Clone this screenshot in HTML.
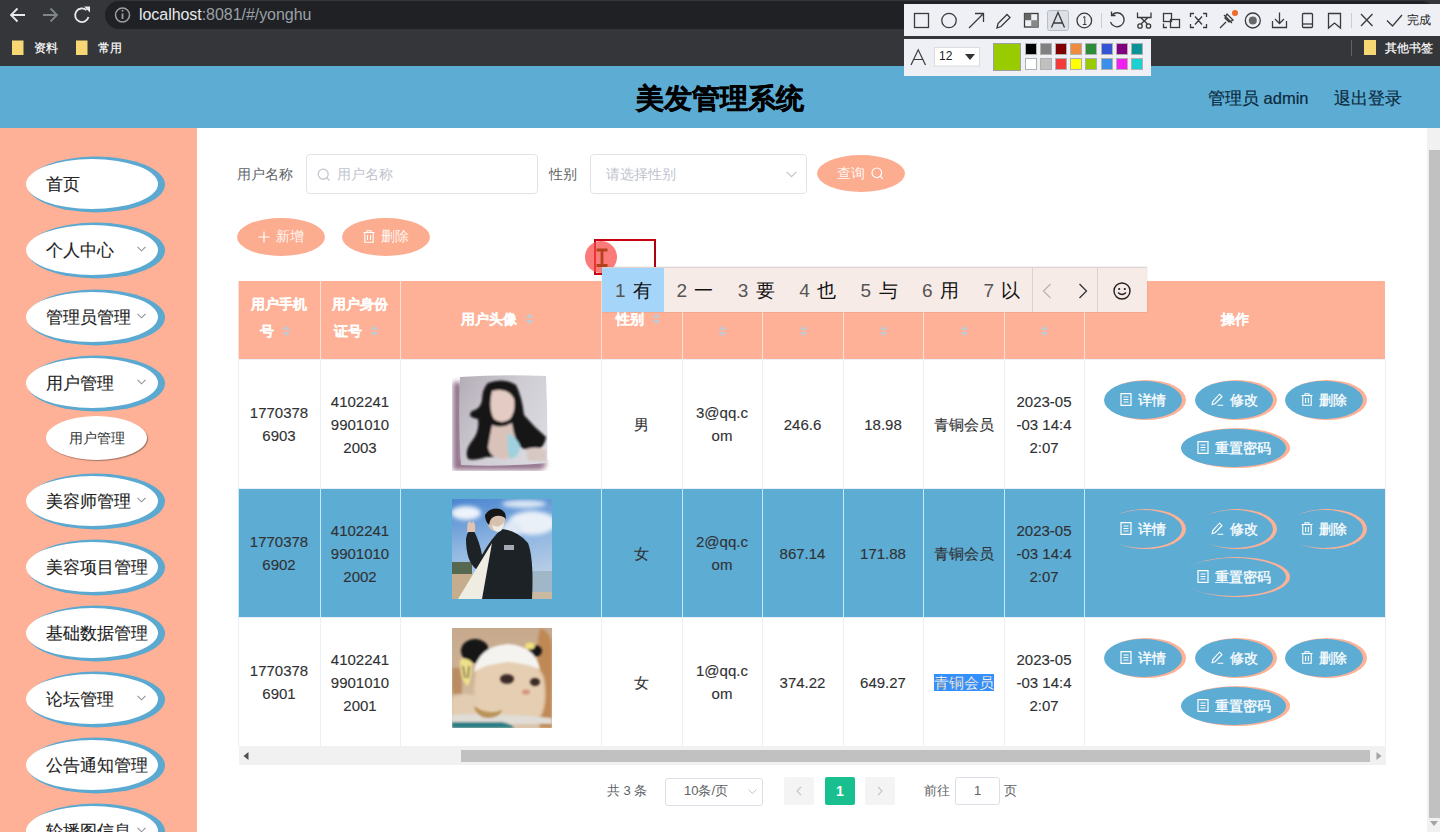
<!DOCTYPE html>
<html><head><meta charset="utf-8">
<style>
*{box-sizing:border-box;margin:0;padding:0}
html,body{width:1440px;height:832px;overflow:hidden;background:#fff;font-family:"Liberation Sans",sans-serif}
.abs{position:absolute}
#chrome{position:absolute;left:0;top:0;width:1440px;height:66px;background:#35363a}
#url{position:absolute;left:105px;top:1px;width:1330px;height:28px;border-radius:14px;background:#202124}
#hdr{position:absolute;left:0;top:66px;width:1440px;height:62px;background:#5dacd4}
#side{position:absolute;left:0;top:128px;width:197px;height:704px;background:#feb196}
#main{position:absolute;left:197px;top:128px;width:1230px;height:704px;background:#fff}
#vscroll{position:absolute;left:1427px;top:128px;width:13px;height:704px;background:#f1f1f1}
#vthumb{position:absolute;left:2px;top:22px;width:11px;height:668px;background:#c1c1c1}
.mi{position:absolute;left:26px;width:132px;height:50px;border-radius:50%;background:#fff;box-shadow:4px 0.5px 0 3px #5ba8d0;font-size:16.5px;color:#222;-webkit-text-stroke:0.12px #222;line-height:50px;padding-left:20px;white-space:nowrap}
.mi .arr{position:absolute;left:111px;top:21px;width:9px;height:6px}
.smi{position:absolute;left:46px;width:101px;height:44px;border-radius:50%;background:#fff;box-shadow:1px 1px 1px rgba(0,0,0,.35);font-size:14px;color:#303133;line-height:44px;text-align:center;white-space:nowrap}
.lbl{position:absolute;font-size:14px;color:#606266;line-height:18px;white-space:nowrap}
.inp{position:absolute;border:1px solid #e2e3e8;border-radius:4px;background:#fff}
.ph{position:absolute;top:10px;font-size:14px;line-height:18px;color:#c0c4cc;white-space:nowrap}
.sbtn{position:absolute;border-radius:50%;background:#fcac8f;color:#fff6f2;font-size:14px;text-align:center;line-height:37px;white-space:nowrap}
.hc{position:absolute;display:flex;align-items:center;justify-content:center;text-align:center;color:#fff;font-weight:bold;-webkit-text-stroke:0.2px #fff;font-size:14px;line-height:27px;padding-bottom:4px}
.cw{display:inline-block;width:24px;height:12px;position:relative;vertical-align:middle}.cw svg{position:absolute;left:8px;top:-1px}
.tc{position:absolute;display:flex;align-items:center;justify-content:center;text-align:center;color:#303133;-webkit-text-stroke:0.12px #303133;font-size:15px;line-height:23px;padding-top:1px}
.sel{background:#3390ff;color:#fff}
.av{position:absolute;width:100px;height:100px}
.av1{background:linear-gradient(160deg,#c8c3cc,#9a8c9a)}
.av2{background:linear-gradient(180deg,#7fb0e0,#c9dcef 55%,#b9a88a)}
.av3{background:linear-gradient(180deg,#cbb49a,#e8d8c4 60%,#4a8a8a)}
.ob,.ob2{position:absolute;height:38px;border-radius:50%;background:#5dacd4;box-shadow:3px 0 0 1px #fdb196;color:#fff;-webkit-text-stroke:0.3px #fff;font-size:14px;line-height:38px;text-align:center;white-space:nowrap}
.ob2{background:transparent}
.bi{vertical-align:-1px;margin-right:6px}
.pg{position:absolute;font-size:13px;color:#606266;line-height:17px;white-space:nowrap}
.imen{position:absolute;top:280px;font-size:19px;line-height:22px;color:#555}
.imec{position:absolute;top:280px;font-size:19px;line-height:22px;color:#111}
.sw{position:absolute;width:12px;height:12px;border:1px solid #b0b0b0}
</style></head><body>
<div id="chrome">
  <div id="url"></div>
<svg class="abs" style="left:0;top:0" width="140" height="66" viewBox="0 0 140 66" fill="none">
<path d="M25 15H11.5M17.5 8.5L11 15L17.5 21.5" stroke="#e8eaed" stroke-width="1.8"/>
<path d="M43 15H56.5M50.5 8.5L57 15L50.5 21.5" stroke="#80868b" stroke-width="1.8"/>
<path d="M88.5 17A6.8 6.8 0 1 1 86.5 10.2" stroke="#e8eaed" stroke-width="1.8"/><path d="M84 6.5H90V12.5Z" fill="#e8eaed"/>
<circle cx="122.5" cy="15" r="7" stroke="#9aa0a6" stroke-width="1.5"/><path d="M122.5 13.5V19" stroke="#9aa0a6" stroke-width="1.8"/><circle cx="122.5" cy="10.8" r="1" fill="#9aa0a6"/>
<path d="M12 40.5H23.5V55H12Z" fill="#f7d774"/>
<path d="M76 40.5H87.5V55H76Z" fill="#f7d774"/>
</svg>
<div class="abs" style="left:139px;top:4px;font-size:16px;line-height:21px;letter-spacing:-0.05px;white-space:nowrap;color:#9aa0a6"><span style="color:#e8eaed">localhost</span>:8081/#/yonghu</div>
<div class="abs" style="left:34px;top:40px;font-size:12px;line-height:16px;color:#fff;-webkit-text-stroke:0.2px #fff">资料</div>
<div class="abs" style="left:98px;top:40px;font-size:12px;line-height:16px;color:#fff;-webkit-text-stroke:0.2px #fff">常用</div>
<div class="abs" style="left:1351px;top:40px;width:1px;height:16px;background:#5f6368"></div>
<div class="abs" style="left:1364px;top:40px;width:12px;height:15px;background:#f7d774"></div>
<div class="abs" style="left:1385px;top:40px;font-size:12px;line-height:16px;color:#fff;-webkit-text-stroke:0.2px #fff;white-space:nowrap">其他书签</div>

</div>
<div id="hdr">
  <div class="abs" style="left:0;top:17px;width:1440px;text-align:center;font-size:28px;font-weight:bold;color:#000;-webkit-text-stroke:0.5px #000;line-height:32px">美发管理系统</div>
  <div class="abs" style="left:1208px;top:21px;font-size:16.5px;color:#0b2a3c;-webkit-text-stroke:0.2px #0b2a3c;line-height:22px;white-space:nowrap">管理员 admin</div>
  <div class="abs" style="left:1334px;top:21px;font-size:16.5px;color:#0b2a3c;-webkit-text-stroke:0.2px #0b2a3c;line-height:22px;white-space:nowrap">退出登录</div>
</div>
<div id="side">
<div class="mi" style="top:31.1px">首页</div>
<div class="mi" style="top:97.1px">个人中心<svg class="arr" viewBox="0 0 9 6"><path d="M0.5 0.8L4.5 4.8L8.5 0.8" fill="none" stroke="#909399" stroke-width="1.1"/></svg></div>
<div class="mi" style="top:163.5px">管理员管理<svg class="arr" viewBox="0 0 9 6"><path d="M0.5 0.8L4.5 4.8L8.5 0.8" fill="none" stroke="#909399" stroke-width="1.1"/></svg></div>
<div class="mi" style="top:230.0px">用户管理<svg class="arr" viewBox="0 0 9 6"><path d="M0.5 0.8L4.5 4.8L8.5 0.8" fill="none" stroke="#909399" stroke-width="1.1"/></svg></div>
<div class="mi" style="top:348.3px">美容师管理<svg class="arr" viewBox="0 0 9 6"><path d="M0.5 0.8L4.5 4.8L8.5 0.8" fill="none" stroke="#909399" stroke-width="1.1"/></svg></div>
<div class="mi" style="top:414.3px">美容项目管理<svg class="arr" viewBox="0 0 9 6"><path d="M0.5 0.8L4.5 4.8L8.5 0.8" fill="none" stroke="#909399" stroke-width="1.1"/></svg></div>
<div class="mi" style="top:480.3px">基础数据管理<svg class="arr" viewBox="0 0 9 6"><path d="M0.5 0.8L4.5 4.8L8.5 0.8" fill="none" stroke="#909399" stroke-width="1.1"/></svg></div>
<div class="mi" style="top:546.3px">论坛管理<svg class="arr" viewBox="0 0 9 6"><path d="M0.5 0.8L4.5 4.8L8.5 0.8" fill="none" stroke="#909399" stroke-width="1.1"/></svg></div>
<div class="mi" style="top:612.3px">公告通知管理<svg class="arr" viewBox="0 0 9 6"><path d="M0.5 0.8L4.5 4.8L8.5 0.8" fill="none" stroke="#909399" stroke-width="1.1"/></svg></div>
<div class="mi" style="top:678.3px">轮播图信息<svg class="arr" viewBox="0 0 9 6"><path d="M0.5 0.8L4.5 4.8L8.5 0.8" fill="none" stroke="#909399" stroke-width="1.1"/></svg></div>
<div class="smi" style="top:288px">用户管理</div>
</div>
<div id="main">
<div class="lbl" style="left:40px;top:37px">用户名称</div>
<div class="inp" style="left:109px;top:26px;width:232px;height:40px">
  <svg class="abs" style="left:10px;top:13px" width="14" height="14" viewBox="0 0 14 14"><circle cx="6.2" cy="6.2" r="5" fill="none" stroke="#c0c4cc" stroke-width="1.2"/><path d="M9.8 9.8L12.5 12.5" stroke="#c0c4cc" stroke-width="1.2"/></svg>
  <div class="ph" style="left:30px">用户名称</div>
</div>
<div class="lbl" style="left:352px;top:37px">性别</div>
<div class="inp" style="left:393px;top:26px;width:217px;height:40px">
  <div class="ph" style="left:15px">请选择性别</div>
  <svg class="abs" style="left:195px;top:16px" width="11" height="7" viewBox="0 0 11 7"><path d="M0.7 0.8L5.5 5.6L10.3 0.8" fill="none" stroke="#c0c4cc" stroke-width="1.2"/></svg>
</div>
<div class="sbtn" style="left:620px;top:27px;width:88px;height:37px;text-align:left;padding-left:20px">查询
  <svg style="position:absolute;left:54px;top:12px" width="13" height="13" viewBox="0 0 13 13"><circle cx="5.8" cy="5.8" r="4.8" fill="none" stroke="#fff" stroke-width="1.2"/><path d="M9.2 9.2L11.8 11.8" stroke="#fff" stroke-width="1.2"/></svg>
</div>
<div class="sbtn" style="left:40px;top:90px;width:88px;height:38px;padding-left:18px">
  <svg style="position:absolute;left:21px;top:13px" width="12" height="12" viewBox="0 0 12 12"><path d="M6 0.5V11.5M0.5 6H11.5" stroke="#fff" stroke-width="1.2"/></svg>新增</div>
<div class="sbtn" style="left:145px;top:90px;width:88px;height:38px;padding-left:18px">
  <svg style="position:absolute;left:21px;top:12px" width="12" height="13" viewBox="0 0 12 13"><path d="M0.5 2.5H11.5M4 2.5V0.8H8V2.5M1.8 2.5V12.3H10.2V2.5M4.5 5V10M7.5 5V10" fill="none" stroke="#fff" stroke-width="1.1"/></svg>删除</div>
</div>
<!--TABLE-->
<div class="abs" style="left:238px;top:281px;width:1147px;height:78px;background:#feb196"></div>
<div class="abs" style="left:238px;top:488px;width:1147px;height:129px;background:#5dacd4"></div>
<div class="abs" style="left:238px;top:359px;width:1147px;height:1px;background:#ebeef5"></div>
<div class="abs" style="left:238px;top:488px;width:1147px;height:1px;background:#ebeef5"></div>
<div class="abs" style="left:238px;top:617px;width:1147px;height:1px;background:#ebeef5"></div>
<div class="abs" style="left:238px;top:281px;width:1px;height:78px;background:#fde0d4"></div>
<div class="abs" style="left:238px;top:359px;width:1px;height:129px;background:#ebeef5"></div>
<div class="abs" style="left:238px;top:488px;width:1px;height:129px;background:#c4e9fb"></div>
<div class="abs" style="left:238px;top:617px;width:1px;height:129px;background:#ebeef5"></div>
<div class="abs" style="left:320px;top:281px;width:1px;height:78px;background:#fde0d4"></div>
<div class="abs" style="left:320px;top:359px;width:1px;height:129px;background:#ebeef5"></div>
<div class="abs" style="left:320px;top:488px;width:1px;height:129px;background:#c4e9fb"></div>
<div class="abs" style="left:320px;top:617px;width:1px;height:129px;background:#ebeef5"></div>
<div class="abs" style="left:400px;top:281px;width:1px;height:78px;background:#fde0d4"></div>
<div class="abs" style="left:400px;top:359px;width:1px;height:129px;background:#ebeef5"></div>
<div class="abs" style="left:400px;top:488px;width:1px;height:129px;background:#c4e9fb"></div>
<div class="abs" style="left:400px;top:617px;width:1px;height:129px;background:#ebeef5"></div>
<div class="abs" style="left:601px;top:281px;width:1px;height:78px;background:#fde0d4"></div>
<div class="abs" style="left:601px;top:359px;width:1px;height:129px;background:#ebeef5"></div>
<div class="abs" style="left:601px;top:488px;width:1px;height:129px;background:#c4e9fb"></div>
<div class="abs" style="left:601px;top:617px;width:1px;height:129px;background:#ebeef5"></div>
<div class="abs" style="left:682px;top:281px;width:1px;height:78px;background:#fde0d4"></div>
<div class="abs" style="left:682px;top:359px;width:1px;height:129px;background:#ebeef5"></div>
<div class="abs" style="left:682px;top:488px;width:1px;height:129px;background:#c4e9fb"></div>
<div class="abs" style="left:682px;top:617px;width:1px;height:129px;background:#ebeef5"></div>
<div class="abs" style="left:762px;top:281px;width:1px;height:78px;background:#fde0d4"></div>
<div class="abs" style="left:762px;top:359px;width:1px;height:129px;background:#ebeef5"></div>
<div class="abs" style="left:762px;top:488px;width:1px;height:129px;background:#c4e9fb"></div>
<div class="abs" style="left:762px;top:617px;width:1px;height:129px;background:#ebeef5"></div>
<div class="abs" style="left:843px;top:281px;width:1px;height:78px;background:#fde0d4"></div>
<div class="abs" style="left:843px;top:359px;width:1px;height:129px;background:#ebeef5"></div>
<div class="abs" style="left:843px;top:488px;width:1px;height:129px;background:#c4e9fb"></div>
<div class="abs" style="left:843px;top:617px;width:1px;height:129px;background:#ebeef5"></div>
<div class="abs" style="left:923px;top:281px;width:1px;height:78px;background:#fde0d4"></div>
<div class="abs" style="left:923px;top:359px;width:1px;height:129px;background:#ebeef5"></div>
<div class="abs" style="left:923px;top:488px;width:1px;height:129px;background:#c4e9fb"></div>
<div class="abs" style="left:923px;top:617px;width:1px;height:129px;background:#ebeef5"></div>
<div class="abs" style="left:1004px;top:281px;width:1px;height:78px;background:#fde0d4"></div>
<div class="abs" style="left:1004px;top:359px;width:1px;height:129px;background:#ebeef5"></div>
<div class="abs" style="left:1004px;top:488px;width:1px;height:129px;background:#c4e9fb"></div>
<div class="abs" style="left:1004px;top:617px;width:1px;height:129px;background:#ebeef5"></div>
<div class="abs" style="left:1084px;top:281px;width:1px;height:78px;background:#fde0d4"></div>
<div class="abs" style="left:1084px;top:359px;width:1px;height:129px;background:#ebeef5"></div>
<div class="abs" style="left:1084px;top:488px;width:1px;height:129px;background:#c4e9fb"></div>
<div class="abs" style="left:1084px;top:617px;width:1px;height:129px;background:#ebeef5"></div>
<div class="abs" style="left:1385px;top:359px;width:1px;height:387px;background:#ebeef5"></div>
<div class="hc" style="left:238px;top:281px;width:82px;height:78px"><div>用户手机<br>号<span class="cw"><svg width="9" height="12" viewBox="0 0 9 12"><path d="M4.5 0.5L8.5 5H0.5Z M4.5 11.5L8.5 7H0.5Z" fill="#c4c8d0"/></svg></span></div></div>
<div class="hc" style="left:320px;top:281px;width:80px;height:78px"><div>用户身份<br>证号<span class="cw"><svg width="9" height="12" viewBox="0 0 9 12"><path d="M4.5 0.5L8.5 5H0.5Z M4.5 11.5L8.5 7H0.5Z" fill="#c4c8d0"/></svg></span></div></div>
<div class="hc" style="padding-bottom:2px;left:400px;top:281px;width:201px;height:78px"><div>用户头像<span class="cw"><svg width="9" height="12" viewBox="0 0 9 12"><path d="M4.5 0.5L8.5 5H0.5Z M4.5 11.5L8.5 7H0.5Z" fill="#c4c8d0"/></svg></span></div></div>
<div class="hc" style="padding-bottom:2px;left:601px;top:281px;width:81px;height:78px"><div>性别<span class="cw"><svg width="9" height="12" viewBox="0 0 9 12"><path d="M4.5 0.5L8.5 5H0.5Z M4.5 11.5L8.5 7H0.5Z" fill="#c4c8d0"/></svg></span></div></div>
<div class="hc" style="left:682px;top:281px;width:80px;height:78px"><div>用户邮箱<br><span class="cw"><svg width="9" height="12" viewBox="0 0 9 12"><path d="M4.5 0.5L8.5 5H0.5Z M4.5 11.5L8.5 7H0.5Z" fill="#c4c8d0"/></svg></span></div></div>
<div class="hc" style="left:762px;top:281px;width:81px;height:78px"><div>余额<br><span class="cw"><svg width="9" height="12" viewBox="0 0 9 12"><path d="M4.5 0.5L8.5 5H0.5Z M4.5 11.5L8.5 7H0.5Z" fill="#c4c8d0"/></svg></span></div></div>
<div class="hc" style="left:843px;top:281px;width:80px;height:78px"><div>积分<br><span class="cw"><svg width="9" height="12" viewBox="0 0 9 12"><path d="M4.5 0.5L8.5 5H0.5Z M4.5 11.5L8.5 7H0.5Z" fill="#c4c8d0"/></svg></span></div></div>
<div class="hc" style="left:923px;top:281px;width:81px;height:78px"><div>会员等级<br><span class="cw"><svg width="9" height="12" viewBox="0 0 9 12"><path d="M4.5 0.5L8.5 5H0.5Z M4.5 11.5L8.5 7H0.5Z" fill="#c4c8d0"/></svg></span></div></div>
<div class="hc" style="left:1004px;top:281px;width:80px;height:78px"><div>创建时间<br><span class="cw"><svg width="9" height="12" viewBox="0 0 9 12"><path d="M4.5 0.5L8.5 5H0.5Z M4.5 11.5L8.5 7H0.5Z" fill="#c4c8d0"/></svg></span></div></div>
<div class="hc" style="padding-bottom:2px;left:1084px;top:281px;width:301px;height:78px"><div>操作</div></div>
<div class="tc" style="left:238px;top:359px;width:82px;height:129px"><div>1770378<br>6903</div></div>
<div class="tc" style="left:320px;top:359px;width:80px;height:129px"><div>4102241<br>9901010<br>2003</div></div>
<div class="tc" style="left:601px;top:359px;width:81px;height:129px"><div>男</div></div>
<div class="tc" style="left:682px;top:359px;width:80px;height:129px"><div>3@qq.c<br>om</div></div>
<div class="tc" style="left:762px;top:359px;width:81px;height:129px"><div>246.6</div></div>
<div class="tc" style="left:843px;top:359px;width:80px;height:129px"><div>18.98</div></div>
<div class="tc" style="left:923px;top:359px;width:81px;height:129px"><div>青铜会员</div></div>
<div class="tc" style="left:1004px;top:359px;width:80px;height:129px"><div>2023-05<br>-03 14:4<br>2:07</div></div>
<div class="av" style="left:452px;top:371px"><svg width="100" height="100" viewBox="0 0 100 100">
<defs>
<linearGradient id="p1" x1="0" y1="0" x2="1" y2="0.6"><stop offset="0" stop-color="#b3adb6"/><stop offset="0.55" stop-color="#cfccd4"/><stop offset="1" stop-color="#dad9df"/></linearGradient>
<filter id="bl1"><feGaussianBlur stdDeviation="2.8"/></filter>
<filter id="bl1b"><feGaussianBlur stdDeviation="1"/></filter>
</defs>
<rect width="100" height="100" fill="#fff"/>
<path d="M1 12Q6 8 10 14V90H94Q96 99 84 99H1Z" fill="#87647f" filter="url(#bl1)" opacity="0.9"/>
<path d="M8 6Q50 3 94 5Q96 50 95 92Q50 96 9 94Q6 50 8 6Z" fill="url(#p1)"/>
<g filter="url(#bl1b)">
<path d="M36 12Q52 6 64 14Q70 26 72 44Q82 56 94 66Q92 80 78 80Q66 76 62 70L60 86H34Q22 90 16 88Q12 80 20 70Q28 60 26 48Q14 46 20 40Q28 38 30 30Q30 18 36 12Z" fill="#161214"/>
<path d="M40 20Q56 16 62 28Q64 40 58 48Q50 54 42 48Q36 38 40 20Z" fill="#e4ccc4"/>
<path d="M40 54Q50 58 60 52Q62 66 66 72Q66 86 52 88Q38 88 36 76Q38 64 40 54Z" fill="#d9c2ba"/>
<path d="M56 62Q64 66 68 74Q68 86 58 88Q54 76 56 62Z" fill="#9fd2de"/>
<path d="M74 78Q86 74 94 80V90H76Z" fill="#d8c8c4"/>
</g>
</svg></div>
<div class="ob" style="left:1104px;top:381px;width:78px"><svg class="bi" width="12" height="13" viewBox="0 0 12 13"><path d="M1 0.6H11V12.4H1Z M3.5 4H8.5 M3.5 6.5H8.5 M3.5 9H8.5" fill="none" stroke="#fff" stroke-width="1.2"/></svg>详情</div>
<div class="ob" style="left:1195px;top:381px;width:78px"><svg class="bi" width="13" height="13" viewBox="0 0 13 13"><path d="M8.5 1.2L11 3.7L4 10.7L1.2 11.6L1.8 8.6Z M6.5 12.3H12.3" fill="none" stroke="#fff" stroke-width="1.1"/></svg>修改</div>
<div class="ob" style="left:1285px;top:381px;width:78px"><svg class="bi" width="12" height="13" viewBox="0 0 12 13"><path d="M0.5 2.5H11.5M4 2.5V0.7H8V2.5M1.8 2.5V12.3H10.2V2.5M4.6 5V10M7.4 5V10" fill="none" stroke="#fff" stroke-width="1.1"/></svg>删除</div>
<div class="ob" style="left:1181px;top:429px;width:105px"><svg class="bi" width="12" height="13" viewBox="0 0 12 13"><path d="M1 0.6H11V12.4H1Z M3.5 4H8.5 M3.5 6.5H8.5 M3.5 9H8.5" fill="none" stroke="#fff" stroke-width="1.2"/></svg>重置密码</div>
<div class="tc" style="left:238px;top:488px;width:82px;height:129px"><div>1770378<br>6902</div></div>
<div class="tc" style="left:320px;top:488px;width:80px;height:129px"><div>4102241<br>9901010<br>2002</div></div>
<div class="tc" style="left:601px;top:488px;width:81px;height:129px"><div>女</div></div>
<div class="tc" style="left:682px;top:488px;width:80px;height:129px"><div>2@qq.c<br>om</div></div>
<div class="tc" style="left:762px;top:488px;width:81px;height:129px"><div>867.14</div></div>
<div class="tc" style="left:843px;top:488px;width:80px;height:129px"><div>171.88</div></div>
<div class="tc" style="left:923px;top:488px;width:81px;height:129px"><div>青铜会员</div></div>
<div class="tc" style="left:1004px;top:488px;width:80px;height:129px"><div>2023-05<br>-03 14:4<br>2:07</div></div>
<div class="av" style="left:452px;top:499px"><svg width="100" height="100" viewBox="0 0 100 100">
<defs>
<linearGradient id="s2" x1="0" y1="0" x2="0.2" y2="1"><stop offset="0" stop-color="#4a86d0"/><stop offset="0.5" stop-color="#8fb6e2"/><stop offset="1" stop-color="#c4d4e6"/></linearGradient>
<filter id="bl2"><feGaussianBlur stdDeviation="2"/></filter>
<filter id="bl2b"><feGaussianBlur stdDeviation="0.7"/></filter>
</defs>
<rect width="100" height="100" fill="url(#s2)"/>
<g filter="url(#bl2)">
<ellipse cx="14" cy="14" rx="15" ry="7" fill="#eef3fa"/>
<ellipse cx="80" cy="24" rx="24" ry="12" fill="#e9f0f8"/>
<ellipse cx="72" cy="5" rx="22" ry="4" fill="#dce7f4"/>
<ellipse cx="60" cy="30" rx="10" ry="8" fill="#dfe9f5"/>
</g>
<rect x="0" y="63" width="20" height="13" fill="#56684f" filter="url(#bl2b)"/>
<rect x="0" y="75" width="28" height="25" fill="#c5ad8e"/>
<rect x="78" y="72" width="22" height="22" fill="#9fb7c7"/>
<rect x="78" y="93" width="22" height="7" fill="#c9b9a2"/>
<g filter="url(#bl2b)">
<path d="M14 40Q15 30 22 32Q28 44 30 56Q40 38 50 30Q66 32 76 44Q82 60 80 100H26Q26 80 24 70Q14 62 14 40Z" fill="#1d2027"/>
<path d="M35 16Q44 12 53 18Q54 28 48 32Q39 34 36 26Z" fill="#d7c0ae"/>
<path d="M33 16Q38 8 48 10Q54 12 54 20Q50 16 44 17Q38 18 37 26Q33 22 33 16Z" fill="#171717"/>
<path d="M40 26Q47 30 52 23Q52 32 46 33Q41 32 40 26Z" fill="#ecebe6"/>
<path d="M15 33Q15 22 18 22Q20 26 21 22Q24 24 23 33Z" fill="#e2c2b2"/>
<path d="M40 44L30 100H6Z" fill="#efece2"/>
<rect x="52" y="46" width="10" height="5" fill="#a4a9b5"/>
</g>
</svg></div>
<div class="ob2" style="left:1104px;top:510px;width:78px"><svg class="bi" width="12" height="13" viewBox="0 0 12 13"><path d="M1 0.6H11V12.4H1Z M3.5 4H8.5 M3.5 6.5H8.5 M3.5 9H8.5" fill="none" stroke="#fff" stroke-width="1.2"/></svg>详情</div>
<div class="ob2" style="left:1195px;top:510px;width:78px"><svg class="bi" width="13" height="13" viewBox="0 0 13 13"><path d="M8.5 1.2L11 3.7L4 10.7L1.2 11.6L1.8 8.6Z M6.5 12.3H12.3" fill="none" stroke="#fff" stroke-width="1.1"/></svg>修改</div>
<div class="ob2" style="left:1285px;top:510px;width:78px"><svg class="bi" width="12" height="13" viewBox="0 0 12 13"><path d="M0.5 2.5H11.5M4 2.5V0.7H8V2.5M1.8 2.5V12.3H10.2V2.5M4.6 5V10M7.4 5V10" fill="none" stroke="#fff" stroke-width="1.1"/></svg>删除</div>
<div class="ob2" style="left:1181px;top:558px;width:105px"><svg class="bi" width="12" height="13" viewBox="0 0 12 13"><path d="M1 0.6H11V12.4H1Z M3.5 4H8.5 M3.5 6.5H8.5 M3.5 9H8.5" fill="none" stroke="#fff" stroke-width="1.2"/></svg>重置密码</div>
<div class="tc" style="left:238px;top:617px;width:82px;height:129px"><div>1770378<br>6901</div></div>
<div class="tc" style="left:320px;top:617px;width:80px;height:129px"><div>4102241<br>9901010<br>2001</div></div>
<div class="tc" style="left:601px;top:617px;width:81px;height:129px"><div>女</div></div>
<div class="tc" style="left:682px;top:617px;width:80px;height:129px"><div>1@qq.c<br>om</div></div>
<div class="tc" style="left:762px;top:617px;width:81px;height:129px"><div>374.22</div></div>
<div class="tc" style="left:843px;top:617px;width:80px;height:129px"><div>649.27</div></div>
<div class="tc" style="left:923px;top:617px;width:81px;height:129px"><div><span class="sel">青铜会员</span></div></div>
<div class="tc" style="left:1004px;top:617px;width:80px;height:129px"><div>2023-05<br>-03 14:4<br>2:07</div></div>
<div class="av" style="left:452px;top:628px"><svg width="100" height="100" viewBox="0 0 100 100">
<defs>
<linearGradient id="c3" x1="0" y1="0" x2="0" y2="1"><stop offset="0" stop-color="#c7aa8e"/><stop offset="0.5" stop-color="#cdb296"/><stop offset="1" stop-color="#dcc7ae"/></linearGradient>
<filter id="bl3"><feGaussianBlur stdDeviation="1.8"/></filter>
<filter id="bl3b"><feGaussianBlur stdDeviation="0.8"/></filter>
</defs>
<rect width="100" height="100" fill="url(#c3)"/>
<g filter="url(#bl3)">
<rect x="0" y="40" width="10" height="26" fill="#b98c62"/>
<path d="M88 0Q100 4 100 20V100H88Q82 70 86 40Q84 16 88 0Z" fill="#c08855"/>
<path d="M24 40Q30 30 56 30Q86 32 92 50Q96 76 88 90Q60 96 32 92Q18 80 24 40Z" fill="#e5ceb1"/>
<path d="M0 70Q14 62 26 70V90H0Z" fill="#e2cdb3"/>
</g>
<g filter="url(#bl3b)">
<path d="M0 87Q40 84 100 90V96H0Z" fill="#e0dcd6"/>
<path d="M0 94H50Q60 96 62 100H0Z" fill="#2b7f86"/>
<ellipse cx="23" cy="23" rx="14" ry="12" fill="#131313"/>
<ellipse cx="83" cy="23" rx="7" ry="6" fill="#161616"/>
<ellipse cx="78" cy="18" rx="5" ry="3.5" fill="#f0df7a"/>
<path d="M22 44Q26 18 56 16Q84 18 88 42Q78 36 56 34Q34 36 22 44Z" fill="#f5f3ef"/>
<path d="M8 32Q14 28 20 34Q20 52 16 58Q8 54 8 32Z" fill="#efe08a"/>
<path d="M11 38L13 50M17 38L16 50" stroke="#5a5040" stroke-width="1.5"/>
<ellipse cx="55" cy="51" rx="7" ry="4.8" fill="#3a2b25"/>
<ellipse cx="83" cy="54" rx="5" ry="4" fill="#3a2b25"/>
<ellipse cx="74" cy="64" rx="4" ry="2.6" fill="#d6957f"/>
<path d="M22 78Q36 88 50 82Q48 90 34 90Q24 88 22 78Z" fill="#b99356"/>
</g>
</svg></div>
<div class="ob" style="left:1104px;top:639px;width:78px"><svg class="bi" width="12" height="13" viewBox="0 0 12 13"><path d="M1 0.6H11V12.4H1Z M3.5 4H8.5 M3.5 6.5H8.5 M3.5 9H8.5" fill="none" stroke="#fff" stroke-width="1.2"/></svg>详情</div>
<div class="ob" style="left:1195px;top:639px;width:78px"><svg class="bi" width="13" height="13" viewBox="0 0 13 13"><path d="M8.5 1.2L11 3.7L4 10.7L1.2 11.6L1.8 8.6Z M6.5 12.3H12.3" fill="none" stroke="#fff" stroke-width="1.1"/></svg>修改</div>
<div class="ob" style="left:1285px;top:639px;width:78px"><svg class="bi" width="12" height="13" viewBox="0 0 12 13"><path d="M0.5 2.5H11.5M4 2.5V0.7H8V2.5M1.8 2.5V12.3H10.2V2.5M4.6 5V10M7.4 5V10" fill="none" stroke="#fff" stroke-width="1.1"/></svg>删除</div>
<div class="ob" style="left:1181px;top:687px;width:105px"><svg class="bi" width="12" height="13" viewBox="0 0 12 13"><path d="M1 0.6H11V12.4H1Z M3.5 4H8.5 M3.5 6.5H8.5 M3.5 9H8.5" fill="none" stroke="#fff" stroke-width="1.2"/></svg>重置密码</div>
<!--/TABLE-->
<!--EXTRA-->
<div class="abs" style="left:239px;top:746px;width:1147px;height:19px;background:#f1f1f1"></div>
<div class="abs" style="left:461px;top:750px;width:909px;height:12px;background:#c1c1c1"></div>
<svg class="abs" style="left:243px;top:752px" width="6" height="8" viewBox="0 0 6 8"><path d="M5.5 0L0.5 4L5.5 8Z" fill="#505050"/></svg>
<svg class="abs" style="left:1376px;top:752px" width="6" height="8" viewBox="0 0 6 8"><path d="M0.5 0L5.5 4L0.5 8Z" fill="#a3a3a3"/></svg>
<div class="pg" style="left:607px;top:782px">共 3 条</div>
<div class="abs" style="left:665px;top:778px;width:98px;height:28px;border:1px solid #dcdfe6;border-radius:3px"></div>
<div class="pg" style="left:684px;top:782px;color:#606266">10条/页</div>
<svg class="abs" style="left:748px;top:789px" width="9" height="6" viewBox="0 0 9 6"><path d="M0.6 0.6L4.5 4.5L8.4 0.6" fill="none" stroke="#c0c4cc" stroke-width="1"/></svg>
<div class="abs" style="left:784px;top:777px;width:30px;height:28px;background:#f4f4f5;border-radius:2px"></div>
<svg class="abs" style="left:796px;top:786px" width="6" height="10" viewBox="0 0 6 10"><path d="M5 0.8L1 5L5 9.2" fill="none" stroke="#c0c4cc" stroke-width="1.2"/></svg>
<div class="abs" style="left:825px;top:777px;width:30px;height:28px;background:#19bf8e;border-radius:2px;color:#fff;font-weight:bold;font-size:14px;line-height:28px;text-align:center">1</div>
<div class="abs" style="left:865px;top:777px;width:30px;height:28px;background:#f4f4f5;border-radius:2px"></div>
<svg class="abs" style="left:877px;top:786px" width="6" height="10" viewBox="0 0 6 10"><path d="M1 0.8L5 5L1 9.2" fill="none" stroke="#c0c4cc" stroke-width="1.2"/></svg>
<div class="pg" style="left:924px;top:782px">前往</div>
<div class="abs" style="left:955px;top:777px;width:45px;height:28px;border:1px solid #dcdfe6;border-radius:3px;color:#606266;font-size:13px;line-height:26px;text-align:center">1</div>
<div class="pg" style="left:1004px;top:782px">页</div>
<!--/EXTRA-->
<!--IME-->
<div class="abs" style="left:594px;top:239px;width:62px;height:36px;border:2px solid #c8000f;border-right-color:#b0000c"></div>
<div class="abs" style="left:585px;top:241px;width:32px;height:32px;border-radius:50%;background:rgba(250,70,70,.72)"></div>
<svg class="abs" style="left:596px;top:248px" width="12" height="20" viewBox="0 0 12 20"><path d="M0.5 2H11.5M0.5 17.5H11.5M6 2V17.5" fill="none" stroke="#b3421c" stroke-width="2.8"/></svg>
<div class="abs" style="left:602px;top:267px;width:545px;height:45px;background:#f7ebe8;border-top:1px solid #ddd3d0;box-shadow:0 0 1px rgba(0,0,0,.25)"></div>
<div class="abs" style="left:602px;top:268px;width:62px;height:44px;background:#a6d5fa"></div>
<div class="abs" style="left:1032px;top:268px;width:1px;height:44px;background:#dcd2cf"></div>
<div class="abs" style="left:1097px;top:268px;width:1px;height:44px;background:#dcd2cf"></div>
<div class="imen" style="left:615.0px">1</div><div class="imec" style="left:633.0px">有</div>
<div class="imen" style="left:676.4px">2</div><div class="imec" style="left:694.4px">一</div>
<div class="imen" style="left:737.8px">3</div><div class="imec" style="left:755.8px">要</div>
<div class="imen" style="left:799.2px">4</div><div class="imec" style="left:817.2px">也</div>
<div class="imen" style="left:860.6px">5</div><div class="imec" style="left:878.6px">与</div>
<div class="imen" style="left:922.0px">6</div><div class="imec" style="left:940.0px">用</div>
<div class="imen" style="left:983.4px">7</div><div class="imec" style="left:1001.4px">以</div>
<svg class="abs" style="left:1042px;top:283px" width="10" height="16" viewBox="0 0 10 16"><path d="M8.5 1L1.5 8L8.5 15" fill="none" stroke="#bdb5b3" stroke-width="1.3"/></svg>
<svg class="abs" style="left:1078px;top:283px" width="10" height="16" viewBox="0 0 10 16"><path d="M1.5 1L8.5 8L1.5 15" fill="none" stroke="#333" stroke-width="1.3"/></svg>
<svg class="abs" style="left:1113px;top:282px" width="18" height="18" viewBox="0 0 18 18"><circle cx="9" cy="9" r="8" fill="none" stroke="#222" stroke-width="1.4"/><circle cx="6.2" cy="7" r="1.1" fill="#222"/><circle cx="11.8" cy="7" r="1.1" fill="#222"/><path d="M5 10.5Q9 14.5 13 10.5" fill="none" stroke="#222" stroke-width="1.3"/></svg>
<!--/IME-->
<div id="vscroll"><div id="vthumb"></div><svg style="position:absolute;left:3px;top:693px" width="8" height="5" viewBox="0 0 8 5"><path d="M0 0H8L4 5Z" fill="#a3a3a3"/></svg></div>
<!--TB-->
<div class="abs" style="left:904px;top:4px;width:536px;height:32px;background:#eef0f5"></div>
<div class="abs" style="left:904px;top:39px;width:247px;height:37px;background:#eef0f5"></div>
<svg class="abs" style="left:904px;top:4px" width="536" height="32" viewBox="904 4 536 32" fill="none" stroke="#3a3a3a" stroke-width="1.3"><rect x="914.5" y="13.5" width="14" height="14"/><circle cx="949" cy="20.5" r="7.2"/><path d="M969 28L983.5 13.5M975 13.5H983.5V22"/><path d="M997 28L998 23.5L1007 14.5L1010 17.5L1001 26.5Z"/><rect x="1024.5" y="13.5" width="13.5" height="13.5"/><rect x="1024.5" y="13.5" width="6.7" height="6.7" fill="#666" stroke="none"/><rect x="1031.2" y="20.2" width="6.7" height="6.7" fill="#888" stroke="none"/><rect x="1047.5" y="10.5" width="21" height="20" rx="2" fill="#dde0e6" stroke="#b8bcc4" stroke-width="1"/><path d="M1051.5 27.5L1058 12.5L1064.5 27.5M1053.5 23H1062.5"/><circle cx="1084.3" cy="20.5" r="7.3"/><path d="M1083 17.5L1084.8 16.5V24.5M1082.8 24.5H1086.5" stroke-width="1"/><path d="M1101.5 13V28" stroke="#ccc" stroke-width="1"/><path d="M1112 15A7 7 0 1 1 1110.5 22M1111.5 11.5V15.5H1115.5"/><path d="M1137.5 12.5V17.5H1151V12.5M1140.5 17.5L1147.5 24M1148 17.5L1141 24"/><circle cx="1140" cy="26" r="2.2"/><circle cx="1148.5" cy="26" r="2.2"/><rect x="1163.5" y="13.5" width="8" height="8"/><rect x="1170.5" y="19.5" width="9" height="8"/><path d="M1163.5 23.5V27.5H1167"/><path d="M1190.5 17V13.5H1194M1203 13.5H1206.5V17M1206.5 24V27.5H1203M1194 27.5H1190.5V24M1195 16.5L1202 24.5M1202 16.5L1195 24.5"/><path d="M1220 28L1226 22M1224 15L1232 23M1227 14L1233 20L1229 22L1225 18Z"/><circle cx="1252.8" cy="20.5" r="7.5"/><circle cx="1252.8" cy="20.5" r="4" fill="#666" stroke="none"/><path d="M1279.5 12.5V23.5M1275 19L1279.5 23.5L1284 19M1272.5 21V27.5H1286.5V21"/><rect x="1302.5" y="13.5" width="10" height="14" rx="1"/><path d="M1302.5 24H1312.5"/><path d="M1328.5 13.5H1340.5V28L1334.5 23L1328.5 28Z"/><path d="M1351.5 13V28" stroke="#ccc" stroke-width="1"/><path d="M1361 14L1372.5 26M1372.5 14L1361 26"/><path d="M1387 20.5L1392.5 26L1402 15"/></svg>
<div class="abs" style="left:1232px;top:10px;width:6px;height:6px;border-radius:50%;background:#f06a28"></div>
<div class="abs" style="left:1407px;top:12px;font-size:12px;line-height:16px;color:#222;white-space:nowrap">完成</div>
<svg class="abs" style="left:904px;top:39px" width="247" height="37" viewBox="904 39 247 37" fill="none" stroke="#3a3a3a" stroke-width="1.2"><path d="M911 65L918.2 49.8L925.5 65M913.8 59.5H922.6"/><rect x="934.5" y="47.5" width="45" height="18.5" fill="#fff" stroke="#dcdcdc" stroke-width="1"/><path d="M965 54H975L970 60Z" fill="#333" stroke="none"/><rect x="993.5" y="43.5" width="27" height="27" fill="#99cc00" stroke="#9e9e9e" stroke-width="1"/></svg>
<div class="abs" style="left:939px;top:48px;font-size:12px;line-height:16px;color:#222">12</div>
<div class="sw" style="left:1025.0px;top:43px;background:#000000"></div><div class="sw" style="left:1025.0px;top:58px;background:#ffffff"></div>
<div class="sw" style="left:1040.1px;top:43px;background:#808080"></div><div class="sw" style="left:1040.1px;top:58px;background:#c0c0c0"></div>
<div class="sw" style="left:1055.2px;top:43px;background:#800000"></div><div class="sw" style="left:1055.2px;top:58px;background:#f23b3b"></div>
<div class="sw" style="left:1070.3px;top:43px;background:#f08a3c"></div><div class="sw" style="left:1070.3px;top:58px;background:#ffff00"></div>
<div class="sw" style="left:1085.4px;top:43px;background:#2e8b3a"></div><div class="sw" style="left:1085.4px;top:58px;background:#99cc00"></div>
<div class="sw" style="left:1100.5px;top:43px;background:#3355d4"></div><div class="sw" style="left:1100.5px;top:58px;background:#3b8fe8"></div>
<div class="sw" style="left:1115.6px;top:43px;background:#800080"></div><div class="sw" style="left:1115.6px;top:58px;background:#f01ef0"></div>
<div class="sw" style="left:1130.7px;top:43px;background:#0a9396"></div><div class="sw" style="left:1130.7px;top:58px;background:#1ccfd0"></div>
<!--/TB-->
</body></html>
